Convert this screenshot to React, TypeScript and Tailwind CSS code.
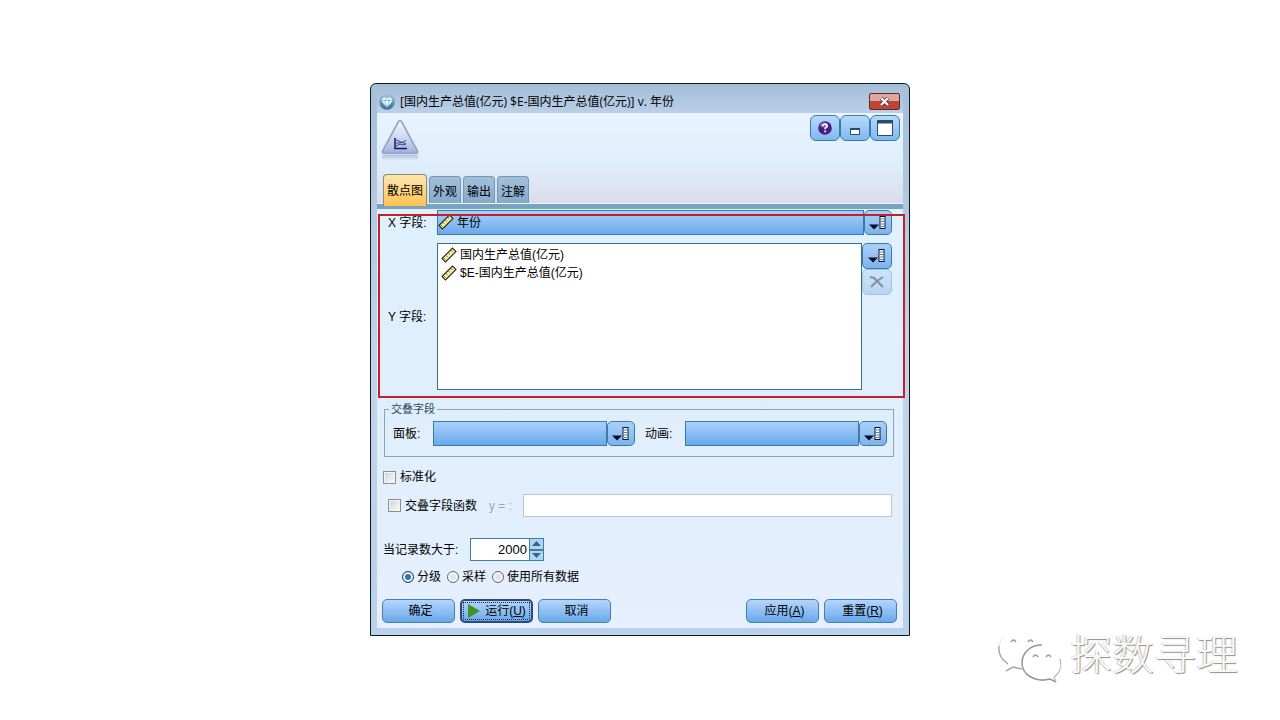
import { FC, ReactNode, useState } from "react";

interface ISelectOption {
  value: string;
  label: string;
}

const xOptions: ISelectOption[] = [{ value: "year", label: "年份" }];

const yFields = ["国内生产总值(亿元)", "$E-国内生产总值(亿元)"];

const tabs = ["散点图", "外观", "输出", "注解"];

const modes: ISelectOption[] = [
  { value: "bin", label: "分级" },
  { value: "sample", label: "采样" },
  { value: "all", label: "使用所有数据" },
];

const RulerIcon: FC = () => (
  <svg width="16" height="16" viewBox="0 0 16 16" aria-hidden="true">
    <path
      d="M1 11.500 11.500 1l3.500 3.500L4.500 15z"
      fill="#f3efa6"
      stroke="#2b2a1c"
      strokeWidth="1.100"
    />
    <path
      d="M4.500 8l2 2M7 5.500l2 2M9.500 3l2 2M3 11l1.500 1.500"
      stroke="#6d6a35"
      strokeWidth="0.900"
    />
  </svg>
);

const PickerIcon: FC = () => (
  <svg width="18" height="16" viewBox="0 0 18 16" aria-hidden="true">
    <path d="M0 9.500h10L5 14.500z" fill="#0a0a23" />
    <rect x="11" y="1.500" width="5" height="12" fill="#fff" stroke="#0a1420" />
    <path d="M11.500 4h4M11.500 6.500h4M11.500 9h4M11.500 11.500h4" stroke="#4b86a8" />
  </svg>
);

const GemIcon: FC = () => (
  <svg width="16" height="16" viewBox="0 0 16 16" aria-hidden="true">
    <defs>
      <linearGradient id="gem" x1="0" y1="0" x2="0" y2="1">
        <stop offset="0" stopColor="#9cc3dc" />
        <stop offset="1" stopColor="#2f6d95" />
      </linearGradient>
    </defs>
    <circle cx="8" cy="8" r="7.800" fill="url(#gem)" />
    <path d="M4.500 3.500h7L14 6.500 8 13.500 2 6.500z" fill="#f4fbff" />
    <path
      d="M2 6.500h12M5.500 6.500 8 13l2.500-6.500L8 3.500z"
      fill="none"
      stroke="#7fb0cc"
      strokeWidth="0.800"
    />
  </svg>
);

const PlotIcon: FC = () => (
  <svg width="38" height="42" viewBox="0 0 38 42" aria-hidden="true">
    <defs>
      <linearGradient id="tri" x1="0" y1="0" x2="0" y2="1">
        <stop offset="0" stopColor="#f3f6fd" />
        <stop offset="0.500" stopColor="#cfd9f3" />
        <stop offset="1" stopColor="#9db0e0" />
      </linearGradient>
      <linearGradient id="mirror" x1="0" y1="0" x2="0" y2="1">
        <stop offset="0" stopColor="#b4c2e6" />
        <stop offset="1" stopColor="#dfeaf9" />
      </linearGradient>
    </defs>
    <path d="M1 36h36v5H1z" fill="url(#mirror)" />
    <path
      d="M17.500 2.500q1.500-2 3 0L36.500 32q.6 2.500-1.500 2.500H3Q.9 34.500 1.500 32z"
      fill="url(#tri)"
      stroke="#9aa3bd"
      strokeWidth="1.600"
    />
    <path d="M14 19v10.500h12" fill="none" stroke="#131a5c" strokeWidth="1.500" />
    <path
      d="M15 21l3 1 3 2 4-3M15 27l4-2 3 1 3-1M15 24l3 0 3-1 4 2"
      fill="none"
      stroke="#3d4684"
    />
  </svg>
);

const ChatLogo: FC = () => (
  <svg width="66" height="54" viewBox="0 0 66 54" fill="none" aria-hidden="true">
    <path
      d="M1 17C0 25 4 31 10 35M8 42l7-4 9 2"
      stroke="#a8a8a8"
      strokeWidth="1.500"
    />
    <path d="M1 17Q2 11 6 8" stroke="#e2e2e2" />
    <path
      d="M44 16C32 16 24 24 24 34c0 12 14 20 28 16l6 3"
      stroke="#959595"
      strokeWidth="1.500"
    />
    <path d="M58 53l-2-5c6-4 8-11 6-18" stroke="#b4b4b4" strokeWidth="1.200" />
    <path
      d="M13 13q2.500-4 5 0M30 13q2.500-4 5 0M35 28q2.500-4 5 0M48 28q2.500-4 5 0"
      stroke="#a0a0a0"
      strokeWidth="1.600"
    />
  </svg>
);

interface PickerProps {
  id: string;
  name: string;
  options?: ISelectOption[];
  icon?: ReactNode;
}

const FieldPicker: FC<PickerProps> = ({ id, name, options = [], icon }) => (
  <div className="flex min-w-0 flex-1">
    <div className="relative min-w-0 flex-1">
      <select
        id={id}
        className={
          "block h-[25px] w-full appearance-none border border-[#3a7ca8] bg-linear-to-b from-[#a9d0fa] to-[#6aa9ea] text-black outline-none " +
          (icon ? "pl-[19px]" : "pl-1")
        }
      >
        {options.length ? (
          options.map((o) => (
            <option key={o.value} value={o.value}>
              {o.label}
            </option>
          ))
        ) : (
          <option value="" aria-label="空" />
        )}
      </select>
      {icon && (
        <span className="pointer-events-none absolute top-1 left-px">{icon}</span>
      )}
    </div>
    <button
      type="button"
      aria-label={"选择" + name}
      className="flex h-[25px] w-7 items-center justify-center rounded-[5px] border border-[#3a7ca8] bg-linear-to-b from-[#a9d0fa] to-[#7db3ec]"
    >
      <PickerIcon />
    </button>
  </div>
);

interface DialogButtonProps {
  children: ReactNode;
  active?: boolean;
}

const DialogButton: FC<DialogButtonProps> = ({ children, active }) => (
  <button
    type="button"
    className={
      "h-6 w-[73px] rounded-[5px] border bg-linear-to-b from-[#b4d5fb] to-[#68a9ea] p-px " +
      (active ? "border-2 border-[#2b4a78]" : "border-[#4581ad]")
    }
  >
    <span
      className={
        "flex h-full items-center justify-center " +
        (active ? "gap-1 border border-dotted border-[#1c2c4c]" : "pl-1")
      }
    >
      {children}
    </span>
  </button>
);

const toolBtn =
  "flex h-[26px] w-[30px] items-center justify-center rounded-[6px] border border-[#3a7ca8] bg-linear-to-b from-[#b6dafb] to-[#7fb8f0]";

const checkBox =
  "size-[13px] appearance-none border border-[#8a8f96] bg-linear-to-br from-[#cfd2d6] to-[#fbfbfb] shadow-[inset_0_0_0_1px_#f4f4f4] checked:bg-[#3a7ca8]";

const App: FC = () => {
  const [tab, setTab] = useState(tabs[0]);
  const [mode, setMode] = useState("bin");
  const [limit, setLimit] = useState(2000);

  return (
    <div className="relative min-h-screen bg-white px-4 pt-[83px] pb-[84px] font-['Liberation_Sans','Noto_Sans_CJK_SC',sans-serif] text-[12px] leading-4 text-black">
      <main className="relative mx-auto w-full max-w-[540px] rounded-t-[6px] border border-[#0d1a26] bg-linear-to-b from-[#a7bfd9] via-[#c3d3ea] to-[#b9d1ea] px-[6px] pb-[7px]">
        <header className="flex h-[29px] items-center bg-linear-to-b from-[#a5bcd6] to-[#b9d0e8] pt-[6px] pr-[3px] pl-[2px]">
          <GemIcon />
          <h1 className="flex-1 pl-[5px] font-['Open_Sans','Noto_Sans_CJK_SC',sans-serif] whitespace-nowrap">
            [国内生产总值(亿元) $E-国内生产总值(亿元)] v. 年份
          </h1>
          <button
            type="button"
            aria-label="关闭"
            className="flex h-[17px] w-[31px] items-center justify-center rounded-[2px] border border-[#5a2a30] bg-linear-to-b from-[#e0a59b] from-45% to-[#bd4534] to-50%"
          >
            <svg width="11" height="9" viewBox="0 0 11 9" aria-hidden="true">
              <path d="M2 1l7 7M9 1L2 8" stroke="#4b2a35" strokeWidth="3.600" />
              <path d="M2 1l7 7M9 1L2 8" stroke="#fff" strokeWidth="2.200" />
            </svg>
          </button>
        </header>

        <div className="flex flex-col bg-linear-to-b from-[#e8f3fe] via-[#dfeefc] via-55% to-[#d9d9e6]">
          <div className="flex h-[61px] items-start justify-between pt-[2px] pr-[3px] pl-1">
            <div className="pt-1">
              <PlotIcon />
            </div>
            <div className="flex">
              <button type="button" aria-label="帮助" className={toolBtn}>
                <svg width="14" height="14" viewBox="0 0 14 14" aria-hidden="true">
                  <circle cx="7" cy="7" r="6.800" fill="#4b1d86" />
                  <ellipse cx="6" cy="4" rx="4" ry="2.500" fill="#8a63bd" />
                  <path
                    d="M4.800 5.200Q5 3.200 7 3.200t2.200 1.900Q9.200 6.300 7.200 7.300v1M7.200 9.600v1.600"
                    fill="none"
                    stroke="#fff"
                    strokeWidth="1.700"
                  />
                </svg>
              </button>
              <button type="button" aria-label="最小化" className={toolBtn}>
                <svg width="16" height="16" viewBox="0 0 16 16" aria-hidden="true">
                  <path d="M3.500 8.500h9v6h-9z" fill="#fff" stroke="#2d4a68" />
                  <path d="M3 9h10" stroke="#2d4a68" strokeWidth="2" />
                </svg>
              </button>
              <button type="button" aria-label="最大化" className={toolBtn}>
                <svg width="16" height="16" viewBox="0 0 16 16" aria-hidden="true">
                  <path d="M.5.5h15v15H.5z" fill="#fff" stroke="#2d4a68" />
                  <path d="M0 2h16" stroke="#2d4a68" strokeWidth="3" />
                </svg>
              </button>
            </div>
          </div>
          <div
            role="tablist"
            className="flex h-[30px] items-end gap-[2px] border-b border-[#eef5fb] pl-[6px]"
          >
            {tabs.map((t) => (
              <button
                key={t}
                type="button"
                role="tab"
                aria-selected={t === tab}
                onClick={() => setTab(t)}
                className={
                  t === tab
                    ? "z-10 -mb-[3px] h-8 w-11 rounded-t-[4px] border border-b-0 border-[#8b8b78] bg-linear-to-b from-[#fbe6b0] to-[#ffc24f]"
                    : "h-[27px] w-8 rounded-t-[4px] border border-b-0 border-[#7397b4] bg-linear-to-b from-[#a3c0da] to-[#83abcc] pt-1"
                }
              >
                {t}
              </button>
            ))}
          </div>
          <div className="h-[5px] bg-[#7aa3bf]" />
        </div>

        <form
          className="bg-linear-to-b from-[#def1fd] via-[#e0eefb] to-[#e6effd] px-[5px] pt-px pb-[5px]"
          onSubmit={(e) => e.preventDefault()}
        >
          <section>
            <div className="flex items-center pr-[6px] pl-[6px]">
              <label htmlFor="x-field" className="w-[49px]">
                X 字段:
              </label>
              <FieldPicker
                id="x-field"
                name="X 字段"
                options={xOptions}
                icon={<RulerIcon />}
              />
            </div>

            <div className="mt-2 flex items-start pr-[6px] pl-[6px]">
              <span id="y-label" className="w-[49px] self-center">
                Y 字段:
              </span>
              <ul
                aria-labelledby="y-label"
                className="h-[147px] min-w-0 flex-1 border border-[#3b6f8f] bg-white pt-[2px] pl-[3px]"
              >
                {yFields.map((f) => (
                  <li key={f} className="flex h-[18px] items-center gap-[3px]">
                    <RulerIcon />
                    {f}
                  </li>
                ))}
              </ul>
              <div className="flex flex-col">
                <button
                  type="button"
                  aria-label="选择 Y 字段"
                  className="flex h-[26px] w-[30px] items-center justify-center rounded-[5px] border border-[#3a7ca8] bg-linear-to-b from-[#a9d0fa] to-[#7db3ec]"
                >
                  <PickerIcon />
                </button>
                <button
                  type="button"
                  aria-label="删除 Y 字段"
                  disabled
                  className="flex h-[26px] w-[30px] items-center justify-center rounded-[5px] border border-[#a4c4dc] bg-linear-to-b from-[#cde4f8] to-[#b7d5f2]"
                >
                  <svg width="16" height="14" viewBox="0 0 16 14" aria-hidden="true">
                    <path
                      d="M1 2l4 1 9 9M14 2L8 6l-6 6"
                      fill="none"
                      stroke="#85909d"
                      strokeWidth="2"
                    />
                  </svg>
                </button>
              </div>
            </div>
          </section>

          <fieldset className="mr-1 ml-[2px] mt-[11px] flex border border-[#8aa5bb] pt-1 pr-[6px] pb-[10px] pl-2">
            <legend className="-ml-1 px-[2px] text-[11px] text-[#2c4964]">
              交叠字段
            </legend>
            <div className="flex flex-1 items-center">
              <label htmlFor="panel" className="w-10">
                面板:
              </label>
              <FieldPicker id="panel" name="面板" />
            </div>
            <div className="ml-[10px] flex flex-1 items-center">
              <label htmlFor="animation" className="w-10">
                动画:
              </label>
              <FieldPicker id="animation" name="动画" />
            </div>
          </fieldset>

          <label className="mt-3 flex w-fit items-center gap-1 pl-px">
            <input type="checkbox" className={checkBox} />
            标准化
          </label>

          <div className="mt-[9px] flex items-center pr-[6px] pl-[6px]">
            <label className="flex items-center gap-1">
              <input type="checkbox" className={checkBox} />
              交叠字段函数
            </label>
            <label htmlFor="fn" className="ml-3 w-[34px] text-[#9aa6b2]">
              y = :
            </label>
            <input
              id="fn"
              type="text"
              disabled
              className="h-[23px] min-w-0 flex-1 border border-[#b9c7d3] bg-white px-1"
            />
          </div>

          <div className="mt-[21px] flex items-center pl-px">
            <label htmlFor="limit" className="w-[87px]">
              当记录数大于:
            </label>
            <input
              id="limit"
              type="text"
              inputMode="numeric"
              value={limit}
              onChange={(e) => setLimit(Number(e.target.value) || 0)}
              className="h-[23px] w-[60px] border border-[#3b7fa8] bg-white pr-[2px] text-right text-[13px] outline-none"
            />
            <div className="flex h-[23px] w-[14px] flex-col border border-l-0 border-[#3b7fa8] bg-[#b3d4f3]">
              <button
                type="button"
                aria-label="增加"
                onClick={() => setLimit(limit + 1)}
                className="flex flex-1 items-center justify-center border-b border-[#3b7fa8]"
              >
                <svg width="9" height="5" viewBox="0 0 9 5" aria-hidden="true">
                  <path d="M0 5l4.500-5L9 5z" fill="#3c6284" />
                </svg>
              </button>
              <button
                type="button"
                aria-label="减少"
                onClick={() => setLimit(limit - 1)}
                className="flex flex-1 items-center justify-center border-t border-[#3b7fa8]"
              >
                <svg width="9" height="5" viewBox="0 0 9 5" aria-hidden="true">
                  <path d="M0 0l4.500 5L9 0z" fill="#3c6284" />
                </svg>
              </button>
            </div>
          </div>

          <div className="mt-2 flex gap-[6px] pl-5">
            {modes.map((m) => (
              <label key={m.value} className="flex items-center gap-[3px]">
                <input
                  type="radio"
                  name="mode"
                  value={m.value}
                  checked={mode === m.value}
                  onChange={() => setMode(m.value)}
                  className="size-3 appearance-none rounded-full border border-[#5f6b78] bg-[#dfe4ea] shadow-[inset_0_0_0_2px_#f6f8fa] checked:border-[#2d4a68] checked:bg-[#2f74ad]"
                />
                {m.label}
              </label>
            ))}
          </div>

          <div className="mt-[14px] flex gap-[5px] pr-px">
            <DialogButton>确定</DialogButton>
            <DialogButton active>
              <svg width="14" height="14" viewBox="0 0 14 14" aria-hidden="true">
                <path d="M1 0l12 7L1 14z" fill="#3f9420" />
              </svg>
              <span>
                运行(<u>U</u>)
              </span>
            </DialogButton>
            <DialogButton>取消</DialogButton>
            <div className="ml-auto flex gap-[5px]">
              <DialogButton>
                应用(<u>A</u>)
              </DialogButton>
              <DialogButton>
                重置(<u>R</u>)
              </DialogButton>
            </div>
          </div>
        </form>

        {/* highlight round the X / Y fields, lies over the window frame */}
        <div className="pointer-events-none absolute top-[130px] right-1 left-[7px] h-[184px] border-2 border-[#c3202b]" />
      </main>

      <div className="absolute right-[42px] bottom-[34px] flex items-center gap-[6px]">
        <ChatLogo />
        <span className="text-[42px] leading-[60px] font-light text-[#fafafa] [text-shadow:1px_1px_1px_#8f8f8f,-1px_0_1px_#cccccc]">
          探数寻理
        </span>
      </div>
    </div>
  );
};

export default App;
